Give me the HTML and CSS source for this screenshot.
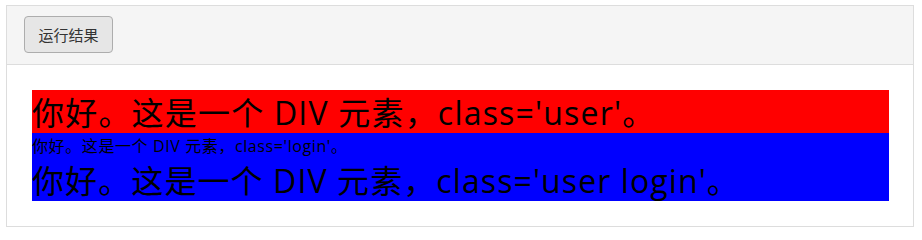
FILE: index.html
```
<!DOCTYPE html>
<html lang="zh-CN">
<head>
<meta charset="utf-8">
<title>运行结果</title>
<link rel="stylesheet" href="styles.css">
</head>
<body>
<div class="frame">
  <div class="toolbar">
    <button class="run-btn" type="button">运行结果</button>
  </div>
  <div class="result">
    <div class="user">你好。这是一个 DIV 元素，class='user'。</div>
    <div class="login">你好。这是一个 DIV 元素，class='login'。</div>
    <div class="user login">你好。这是一个 DIV 元素，class='user login'。</div>
  </div>
</div>
</body>
</html>
```

FILE: styles.css
```
html, body {
  margin: 0;
  padding: 0;
  background: #fff;
}
body {
  font-family: "Open Sans", "Noto Sans CJK SC", sans-serif;
  color: #000;
}
.frame {
  margin: 5px 0 0 6px;
  width: 906px;
  border: 1px solid #dddddd;
  background: #fff;
}
.toolbar {
  background: #f5f5f5;
  border-bottom: 1px solid #dddddd;
  padding: 10px 17px 11px;
  display: flex;
}
.run-btn {
  width: 89px;
  height: 37px;
  background: #e6e6e6;
  border: 1px solid #adadad;
  border-radius: 4px;
  font-family: "Noto Sans CJK SC", sans-serif;
  font-size: 15px;
  color: #333;
  padding: 0;
}
.result {
  padding: 25px 24px 25px 25px;
}
.user {
  background: #ff0000;
  font-size: 32px;
  letter-spacing: 1.2px;
  line-height: 43px;
  height: 42px;
  padding-top: 1px;
  white-space: nowrap;
}
.login {
  background: #0000ff;
  font-size: 16px;
  letter-spacing: 0.6px;
  line-height: 22px;
  height: 23px;
  padding-top: 2px;
  white-space: nowrap;
}
.user.login {
  font-size: 32px;
  letter-spacing: 1.1px;
  line-height: 43px;
  height: 42px;
  padding-top: 1px;
}
```
